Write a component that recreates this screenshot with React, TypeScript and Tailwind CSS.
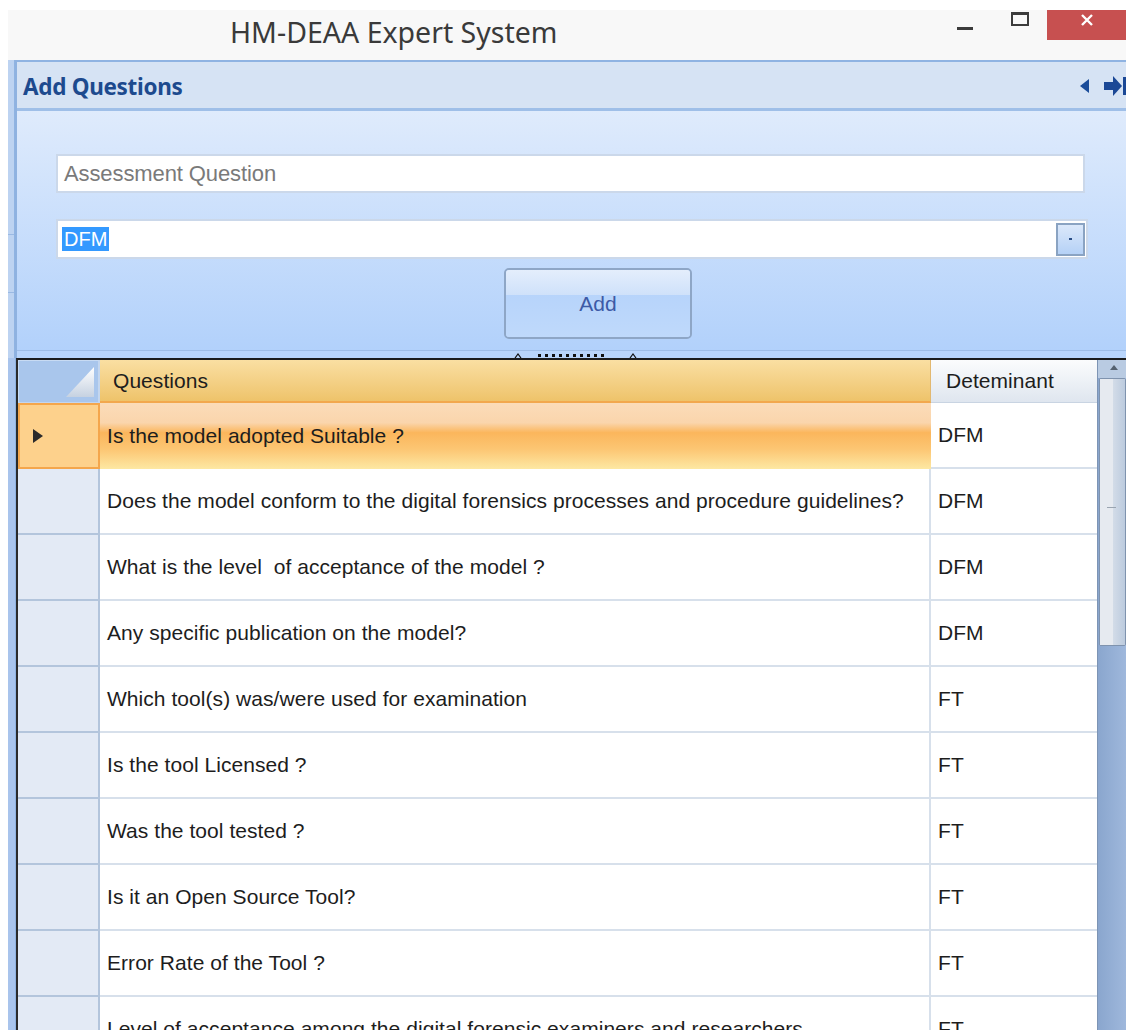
import React from "react";

const rows: [string, string][] = [
  ["Is the model adopted Suitable ?", "DFM"],
  ["Does the model conform to the digital forensics processes and procedure guidelines?", "DFM"],
  ["What is the level  of acceptance of the model ?", "DFM"],
  ["Any specific publication on the model?", "DFM"],
  ["Which tool(s) was/were used for examination", "FT"],
  ["Is the tool Licensed ?", "FT"],
  ["Was the tool tested ?", "FT"],
  ["Is it an Open Source Tool?", "FT"],
  ["Error Rate of the Tool ?", "FT"],
  ["Level of acceptance among the digital forensic examiners and researchers", "FT"],
];

function TitleBar() {
  return (
    <div className="h-[50px] shrink-0 bg-[#f8f8f8] flex items-start">
      <div className="pl-[222px] pt-[5px] text-[28.5px] leading-[34px] text-[#3a3a3a] font-['Noto_Sans',sans-serif] flex-1">
        HM-DEAA Expert System
      </div>
      <div className="flex items-start">
        <div className="w-[20px] h-[30px] mr-[34px] flex items-end pb-[10px]">
          <div className="w-[16px] h-[3px] bg-[#3b3b3b]" />
        </div>
        <div className="w-[20px] h-[30px] mr-[16px] pt-[2px]">
          <div className="w-[18px] h-[14px] border-2 border-t-[3px] border-[#3b3b3b]" />
        </div>
        <div className="w-[79px] h-[30px] bg-[#c75050] flex justify-center pt-[3px]">
          <svg width="14" height="14" viewBox="0 0 14 14">
            <path d="M2 2 L12 12 M12 2 L2 12" stroke="#ffffff" strokeWidth="2.4" />
          </svg>
        </div>
      </div>
    </div>
  );
}

function PanelHeader() {
  return (
    <div className="h-[51px] shrink-0 bg-[#d6e3f4] border-t-2 border-b-[3px] border-t-[#8fb3e2] border-b-[#9fbfe8] flex items-center justify-between">
      <div className="pl-[6px] pt-[3px] text-[22.5px] font-bold text-[#1d4a8e] font-['Noto_Sans',sans-serif] tracking-[-0.3px]">
        Add Questions
      </div>
      <div className="flex items-center gap-[15px] pt-[2px]">
        <svg width="9" height="14" viewBox="0 0 9 14">
          <path d="M9 0 L0 7 L9 14 Z" fill="#1b4d9a" />
        </svg>
        <svg width="22" height="20" viewBox="0 0 22 20">
          <rect x="0" y="6" width="10" height="8" fill="#1b4896" />
          <path d="M9 0 L18 10 L9 20 Z" fill="#1b4896" />
          <rect x="19" y="1" width="3" height="18" fill="#1b4896" />
        </svg>
      </div>
    </div>
  );
}

function FormArea() {
  return (
    <div className="h-[239px] shrink-0 bg-gradient-to-b from-[#dfebfc] to-[#b2d1fb] pl-[39px] pt-[43px] flex flex-col">
      <div className="w-[1029px] h-[39px] bg-white border-2 border-[#cbd8ea] flex items-center pl-[6px]">
        <span className="text-[22px] text-[#7a7a7a] font-['Liberation_Sans',sans-serif] tracking-[-0.1px]">
          Assessment Question
        </span>
      </div>
      <div className="mt-[26px] w-[1032px] h-[40px] bg-white border-2 border-[#cbd8ea] flex items-center pl-[4px] pr-[1px]">
        <span className="bg-[#3399ff] text-white text-[20px] leading-[24px] px-[2px] font-['Liberation_Sans',sans-serif]">
          DFM
        </span>
        <div className="flex-1" />
        <div className="w-[29px] h-[33px] border-2 border-[#8aa3c2] bg-gradient-to-b from-[#dbe8fa] to-[#b5d1f6] flex items-center justify-center">
          <div className="w-[3px] h-[2px] bg-[#2a4d85]" />
        </div>
      </div>
      <div className="mt-[9px] ml-[448px] w-[188px] h-[71px] rounded-[5px] border-2 border-[#8ea6c6] overflow-hidden flex flex-col relative">
        <div className="h-[25px] bg-gradient-to-b from-[#e4eefc] to-[#cfe1fa]" />
        <div className="flex-1 bg-gradient-to-b from-[#b7d4fb] to-[#bfd9fb]" />
        <div className="absolute inset-0 flex items-center justify-center text-[21px] text-[#3d5aa6] font-['Liberation_Sans',sans-serif]">
          Add
        </div>
      </div>
    </div>
  );
}

function Splitter() {
  return (
    <div className="h-[8px] shrink-0 bg-[#b9d5fb] border-t border-[#9fbde6] flex items-end justify-start pl-[497px]">
      <svg width="140" height="6" viewBox="0 0 140 6">
        <path d="M1 6 L4 2 L7 6" fill="none" stroke="#111" strokeWidth="1.2" />
        {[0, 1, 2, 3, 4, 5, 6, 7, 8, 9].map((i) => (
          <rect key={i} x={24 + i * 7} y="2" width="3" height="3" fill="#111" />
        ))}
        <path d="M116 6 L119 2 L122 6" fill="none" stroke="#111" strokeWidth="1.2" />
      </svg>
    </div>
  );
}

const cellText = "text-[21px] text-[#1d1d1d] font-['Liberation_Sans',sans-serif] tracking-[0.05px]";

function HeaderRow() {
  return (
    <div className="h-[43px] flex shrink-0">
      <div className="w-[82px] bg-[#a9c6ec] border-r-2 border-[#c3d6ef] border-[1px] border-t-[#c8dbf3] border-l-[#c8dbf3] relative">
        <svg className="absolute right-[4px] bottom-[5px]" width="28" height="30" viewBox="0 0 28 30">
          <defs>
            <linearGradient id="corner" x1="0" y1="0" x2="0" y2="1">
              <stop offset="0" stopColor="#ffffff" />
              <stop offset="1" stopColor="#c6d2e1" />
            </linearGradient>
          </defs>
          <path d="M28 0 L28 30 L0 30 Z" fill="url(#corner)" />
        </svg>
      </div>
      <div className={`w-[831px] bg-gradient-to-b from-[#fadfa2] to-[#eec36a] border-b-2 border-[#f2a84e] border-r border-r-[#e2b870] flex items-center pl-[13px] ${cellText}`}>
        Questions
      </div>
      <div className={`w-[166px] bg-gradient-to-b from-[#fbfcfd] to-[#dfe6ef] border-b border-[#c9d4e2] flex items-center pl-[15px] ${cellText}`}>
        Deteminant
      </div>
    </div>
  );
}

function DataRow({ q, d, selected }: { q: string; d: string; selected: boolean }) {
  return (
    <div className="h-[66px] flex shrink-0">
      {selected ? (
        <div className="w-[82px] bg-[#fdd18c] border-2 border-[#f4a64c] flex items-center pl-[13px]">
          <svg width="10" height="14" viewBox="0 0 10 14">
            <path d="M0 0 L10 7 L0 14 Z" fill="#2b2b2b" />
          </svg>
        </div>
      ) : (
        <div className="w-[82px] bg-[#e3eaf5] border-r-2 border-b-2 border-[#b3c5dc]" />
      )}
      <div
        className={
          selected
            ? `w-[831px] bg-[linear-gradient(to_bottom,#fbdcb9_0%,#fad5ac_30%,#fbb65c_45%,#fcc673_70%,#fde8a3_100%)] flex items-center pl-[7px] whitespace-pre ${cellText}`
            : `w-[831px] bg-white border-r-2 border-b-2 border-[#d7e0eb] flex items-center pl-[7px] whitespace-pre ${cellText}`
        }
      >
        {q}
      </div>
      <div className={`w-[166px] bg-white border-b-2 border-[#d7e0eb] flex items-center pl-[7px] ${cellText}`}>
        {d}
      </div>
    </div>
  );
}

function ScrollBar() {
  return (
    <div className="w-[29px] shrink-0 flex flex-col bg-gradient-to-r from-[#8aa6ce] to-[#9fb8dc] border-l border-[#7d94b4]">
      <div className="h-[18px] bg-[#b9cbe2] flex justify-center pt-[5px] pl-[4px]">
        <svg width="8" height="5" viewBox="0 0 8 5">
          <path d="M0 5 L4 0 L8 5 Z" fill="#556270" />
        </svg>
      </div>
      <div className="h-[268px] ml-[1px] rounded-[2px] border border-[#7f93ae] flex relative">
        <div className="w-[13px] bg-[#e6eaf0]" />
        <div className="flex-1 bg-gradient-to-r from-[#d3dce8] to-[#bccbde]" />
        <div className="absolute left-[7px] top-[128px] w-[9px] h-[1px] bg-[#9aa4b0]" />
      </div>
      <div className="flex-1" />
    </div>
  );
}

export default function App() {
  return (
    <div className="w-[1126px] h-[1030px] bg-white overflow-hidden pl-[8px] pt-[10px] flex flex-col">
      <TitleBar />
      <div className="flex flex-1 min-h-0">
        {/* docked side strip */}
        <div className="w-[7px] shrink-0 flex flex-col">
          <div className="h-[298px] bg-[#bdd3f1] border-r border-[#8fb3e2] flex flex-col">
            <div className="h-[175px] border-b border-[#9ab9e3]" />
            <div className="h-[58px] border-b border-[#9ab9e3]" />
          </div>
          <div className="flex-1 bg-[#a9c4ec]" />
        </div>
        <div className="flex-1 flex flex-col min-w-0 border-l-2 border-[#8fb2e0]">
          <PanelHeader />
          <FormArea />
          <Splitter />
          <div className="flex-1 min-h-0 flex border-t-2 border-[#1c1c1c] -ml-[1px] border-l-2 border-l-[#2a2a2a] overflow-hidden">
            <div className="flex-1 flex flex-col overflow-hidden">
              <HeaderRow />
              {rows.map(([q, d], i) => (
                <DataRow key={i} q={q} d={d} selected={i === 0} />
              ))}
            </div>
            <ScrollBar />
          </div>
        </div>
      </div>
    </div>
  );
}
